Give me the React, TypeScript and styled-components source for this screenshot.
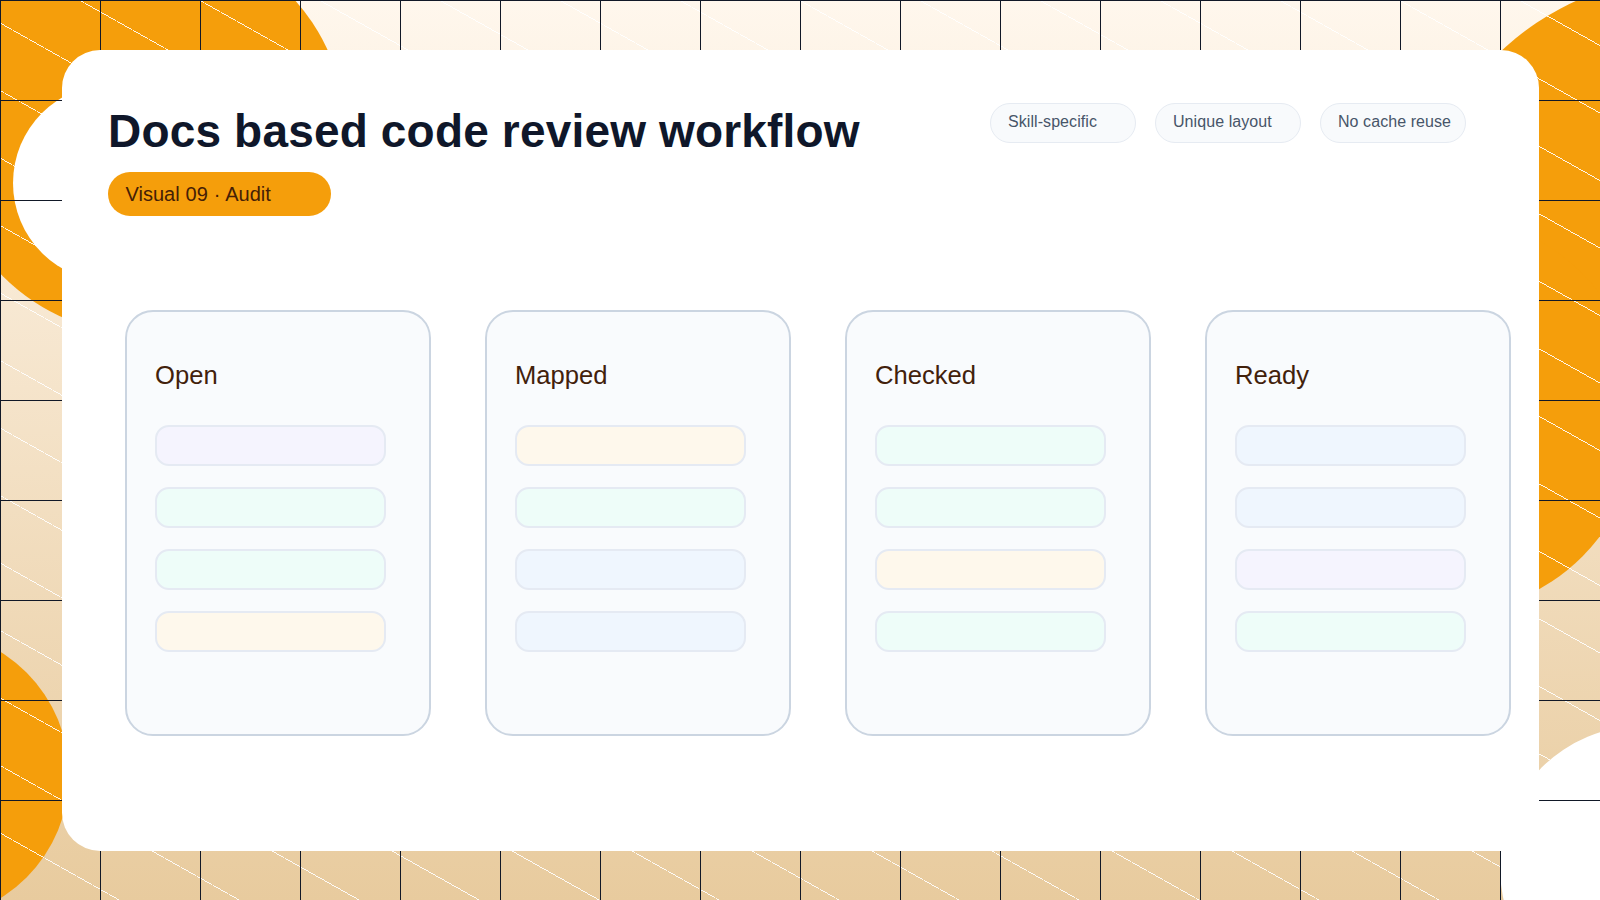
import styled, { createGlobalStyle } from "styled-components"

const GlobalStyle = createGlobalStyle`
    html, body {
        margin: 0;
        padding: 0;
        background: #fff;
    }
    * {
        box-sizing: border-box;
    }
`

const Page = styled.div`
    position: relative;
    width: 1600px;
    height: 900px;
    padding: 50px 61px 49px 62px;
    overflow: hidden;
    background: linear-gradient(180deg, #fff7ed 0%, #e8cb9e 100%);
    font-family: "Liberation Sans", Arial, sans-serif;
`

const Blob = styled.div<{ $x: number; $y: number; $r: number; $color: string }>`
    position: absolute;
    left: ${(p) => p.$x - p.$r}px;
    top: ${(p) => p.$y - p.$r}px;
    width: ${(p) => p.$r * 2}px;
    height: ${(p) => p.$r * 2}px;
    border-radius: 50%;
    background: ${(p) => p.$color};
`

const Lines = styled.div`
    position: absolute;
    inset: 0;
    background-image:
        linear-gradient(#111827 1px, transparent 1px),
        linear-gradient(90deg, #111827 1px, transparent 1px),
        repeating-linear-gradient(29.36deg, transparent 0, transparent 58px, rgba(255, 255, 255, 0.9) 58px, rgba(255, 255, 255, 0.9) 58.83px);
    background-size: 100px 100px, 100px 100px, 100% 100%;
`

const Panel = styled.main`
    position: relative;
    display: flex;
    flex-direction: column;
    width: 1477px;
    height: 801px;
    padding: 53px 73px 0 46px;
    background: #fff;
    border-radius: 38px;
`

const Header = styled.header`
    display: flex;
    justify-content: space-between;
    align-items: flex-start;
`

const TitleBlock = styled.div`
    display: flex;
    flex-direction: column;
    align-items: flex-start;
    padding-top: 2px;
`

const Title = styled.h1`
    margin: 0;
    font-size: 46px;
    line-height: 52px;
    font-weight: 700;
    letter-spacing: 0.17px;
    color: #0f172a;
`

const Tag = styled.div`
    width: 223px;
    height: 44px;
    margin-top: 15px;
    padding-left: 17.5px;
    border-radius: 22px;
    background: #f59e0b;
    color: #452006;
    font-size: 20px;
    line-height: 44px;
    word-spacing: 0.4px;
`

const Chips = styled.div`
    display: flex;
    gap: 19px;
`

const Chip = styled.div`
    width: 146px;
    height: 40px;
    padding-left: 17px;
    border: 1px solid #e6ebf2;
    border-radius: 20px;
    background: #f8fafc;
    color: #475569;
    font-size: 16px;
    line-height: 36px;
    letter-spacing: 0.07px;
`

const Board = styled.section`
    display: flex;
    gap: 54px;
    margin: 94px 0 0 17px;
`

const Column = styled.article`
    flex: none;
    width: 306px;
    height: 426px;
    padding: 48px 27px 0 28px;
    border: 2px solid #cbd5e1;
    border-radius: 28px;
    background: #f9fbfd;
`

const ColumnTitle = styled.h2`
    margin: 0 0 35px;
    font-size: 25.6px;
    line-height: 30px;
    font-weight: 400;
    color: #42210b;
`

const Rows = styled.div`
    display: flex;
    flex-direction: column;
    gap: 21px;
`

const tones = {
    lavender: "#f5f4fe",
    mint: "#eefdf9",
    peach: "#fef8ec",
    blue: "#eff6fe",
}

type Tone = keyof typeof tones

const Row = styled.div<{ $tone: Tone }>`
    width: 231px;
    height: 41px;
    border: 2px solid #e5eaf3;
    border-radius: 14px;
    background: ${(p) => tones[p.$tone]};
`

const columns: { title: string; rows: Tone[] }[] = [
    { title: "Open", rows: ["lavender", "mint", "mint", "peach"] },
    { title: "Mapped", rows: ["peach", "mint", "blue", "blue"] },
    { title: "Checked", rows: ["mint", "mint", "peach", "mint"] },
    { title: "Ready", rows: ["blue", "blue", "lavender", "mint"] },
]

const chips = ["Skill-specific", "Unique layout", "No cache reuse"]

function App() {
    return (
        <>
            <GlobalStyle />
            <Page>
                <Blob $x={145} $y={134} $r={201} $color="#f59e0b" />
                <Blob $x={1687} $y={247} $r={270} $color="#f59e0b" />
                <Blob $x={1441} $y={415} $r={200} $color="#f59e0b" />
                <Blob $x={-76} $y={775} $r={145} $color="#f59e0b" />
                <Blob $x={112} $y={183} $r={99} $color="#fff" />
                <Blob $x={1642} $y={868} $r={142} $color="#fff" />
                <Lines />
                <Panel>
                    <Header>
                        <TitleBlock>
                            <Title>Docs based code review workflow</Title>
                            <Tag>Visual 09 · Audit</Tag>
                        </TitleBlock>
                        <Chips>
                            {chips.map((chip) => (
                                <Chip key={chip}>{chip}</Chip>
                            ))}
                        </Chips>
                    </Header>
                    <Board>
                        {columns.map((column) => (
                            <Column key={column.title}>
                                <ColumnTitle>{column.title}</ColumnTitle>
                                <Rows>
                                    {column.rows.map((tone, i) => (
                                        <Row key={i} $tone={tone} />
                                    ))}
                                </Rows>
                            </Column>
                        ))}
                    </Board>
                </Panel>
            </Page>
        </>
    )
}

export default App
